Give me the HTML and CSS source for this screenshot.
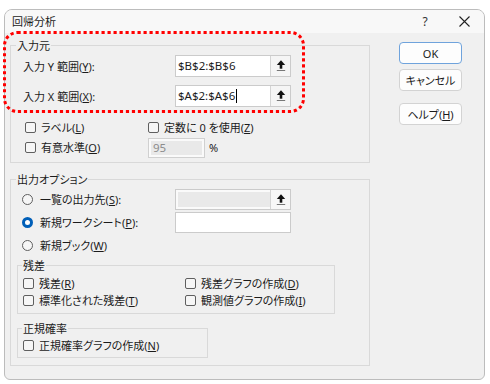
FILE: index.html
```html
<!DOCTYPE html>
<html lang="ja">
<head>
<meta charset="utf-8">
<title>回帰分析</title>
<link rel="stylesheet" href="styles.css">
</head>
<body>
<div class="window">
  <div class="titlebar">
    <span class="title">回帰分析</span>
    <span class="tb-btn tb-help">?</span>
    <span class="tb-btn tb-close"><svg width="11" height="11" viewBox="0 0 11 11"><path d="M0.5 0.5L10.5 10.5M10.5 0.5L0.5 10.5" stroke="#222" stroke-width="1.1" fill="none"/></svg></span>
  </div>
  <div class="content">
    <div class="main">
      <section class="frame input-frame">
        <span class="frame-title">入力元</span>
        <div class="range-row">
          <label class="rng-label">入力 Y 範囲(<u>Y</u>):</label>
          <div class="refedit"><span class="val">$B$2:$B$6</span><span class="collapse"><svg width="10" height="12" viewBox="0 0 10 12"><path d="M5 0.3L0.8 4.9H9.2Z" fill="#111"/><rect x="3.7" y="4.5" width="2.6" height="4.2" fill="#111"/><path d="M0.8 10.5H9.2" stroke="#777" stroke-width="1"/></svg></span></div>
        </div>
        <div class="range-row">
          <label class="rng-label">入力 X 範囲(<u>X</u>):</label>
          <div class="refedit"><span class="val">$A$2:$A$6<span class="caret"></span></span><span class="collapse"><svg width="10" height="12" viewBox="0 0 10 12"><path d="M5 0.3L0.8 4.9H9.2Z" fill="#111"/><rect x="3.7" y="4.5" width="2.6" height="4.2" fill="#111"/><path d="M0.8 10.5H9.2" stroke="#777" stroke-width="1"/></svg></span></div>
        </div>
        <div class="check-row first">
          <span class="check c1"><i class="box"></i><span>ラベル(<u>L</u>)</span></span>
          <span class="check"><i class="box"></i><span>定数に 0 を使用(<u>Z</u>)</span></span>
        </div>
        <div class="check-row second">
          <span class="check c1"><i class="box"></i><span>有意水準(<u>O</u>)</span></span>
          <span class="conf"><span class="disabled-input">95</span><span>%</span></span>
        </div>
      </section>

      <section class="frame output-frame">
        <span class="frame-title">出力オプション</span>
        <div class="radio-row r1">
          <span class="rlabel"><i class="radio"></i><span>一覧の出力先(<u>S</u>):</span></span>
          <div class="refedit disabled"><span class="val"></span><span class="collapse"><svg width="10" height="12" viewBox="0 0 10 12"><path d="M5 0.3L0.8 4.9H9.2Z" fill="#111"/><rect x="3.7" y="4.5" width="2.6" height="4.2" fill="#111"/><path d="M0.8 10.5H9.2" stroke="#777" stroke-width="1"/></svg></span></div>
        </div>
        <div class="radio-row r2">
          <span class="rlabel"><i class="radio on"></i><span>新規ワークシート(<u>P</u>):</span></span>
          <div class="textbox"></div>
        </div>
        <div class="radio-row r3">
          <span class="rlabel"><i class="radio"></i><span>新規ブック(<u>W</u>)</span></span>
        </div>

        <section class="frame sub resid">
          <span class="frame-title">残差</span>
          <div class="srow">
            <span class="check c1"><i class="box"></i><span>残差(<u>R</u>)</span></span>
            <span class="check"><i class="box"></i><span>残差グラフの作成(<u>D</u>)</span></span>
          </div>
          <div class="srow">
            <span class="check c1"><i class="box"></i><span>標準化された残差(<u>T</u>)</span></span>
            <span class="check"><i class="box"></i><span>観測値グラフの作成(<u>I</u>)</span></span>
          </div>
        </section>

        <section class="frame sub normal">
          <span class="frame-title">正規確率</span>
          <div class="srow">
            <span class="check"><i class="box"></i><span>正規確率グラフの作成(<u>N</u>)</span></span>
          </div>
        </section>
      </section>
    </div>

    <div class="buttons">
      <div class="btn default">OK</div>
      <div class="btn cancel">キャンセル</div>
      <div class="btn help">ヘルプ(<u>H</u>)</div>
    </div>
  </div>

  <svg class="highlight" width="302" height="82" viewBox="0 0 302 82"><rect x="1.5" y="1.5" width="299" height="79" rx="13" fill="none" stroke="#ff0000" stroke-width="3" stroke-dasharray="3.2 2.8"/></svg>
</div>
</body>
</html>
```

FILE: styles.css
```css
body {
  margin: 0;
  background: #ffffff;
  font-family: "Noto Sans", "Noto Sans CJK JP", sans-serif;
  font-size: 11px;
  line-height: 17px;
  color: #1b1b1b;
  font-feature-settings: "palt";
}

u {
  text-underline-offset: 1px;
}

.window {
  position: relative;
  margin: 9px 0 0 4px;
  width: 481px;
  height: 371px;
  box-sizing: border-box;
  border: 1px solid #bcbcbc;
  border-radius: 8px 8px 6px 6px;
  background: #f0f0f0;
}

.titlebar {
  height: 23px;
  display: flex;
  align-items: center;
  background: #f8f8f8;
  border-radius: 7px 7px 0 0;
  padding-left: 7px;
}

.title {
  flex: 1;
  line-height: 23px;
}

.tb-btn {
  display: flex;
  align-items: center;
  justify-content: center;
  height: 23px;
}

.tb-help {
  width: 38px;
  font-size: 12px;
  color: #333;
}

.tb-close {
  width: 40px;
}

.content {
  display: flex;
  padding-left: 5px;
}

.main {
  width: 360px;
}

.frame {
  position: relative;
  border: 1px solid #d9d9d9;
}

.frame-title {
  position: absolute;
  top: -9px;
  left: 5px;
  padding: 0 1px;
  line-height: 17px;
  background: #f0f0f0;
  white-space: nowrap;
}

.input-frame {
  margin-top: 12px;
  padding: 9px 0 4px 12px;
}

.range-row {
  display: flex;
  align-items: center;
  height: 22px;
}

.range-row + .range-row {
  margin-top: 8px;
}

.rng-label {
  width: 152px;
}

.refedit {
  width: 116px;
  height: 22px;
  box-sizing: border-box;
  border: 1px solid #cbcbcb;
  background: #ffffff;
  display: flex;
}

.refedit .val {
  flex: 1;
  padding-left: 2px;
  line-height: 20px;
  display: flex;
  align-items: center;
  font-size: 11.5px;
}

.caret {
  display: inline-block;
  width: 1px;
  height: 14px;
  background: #000;
  margin-left: 1px;
}

.collapse {
  width: 20px;
  height: 20px;
  box-sizing: border-box;
  border-left: 1px solid #d4d4d4;
  background: #f5f5f5;
  display: flex;
  align-items: center;
  justify-content: center;
}

.check-row {
  display: flex;
  align-items: center;
  padding-left: 2px;
}

.check-row.first {
  height: 20px;
  margin-top: 10px;
}

.check-row.second {
  height: 21px;
}

.check-row .c1 {
  width: 123px;
}

.check {
  display: flex;
  align-items: center;
  gap: 5px;
  white-space: nowrap;
}

.box {
  width: 11px;
  height: 11px;
  box-sizing: border-box;
  border: 1px solid #5f5f5f;
  border-radius: 2px;
  background: #f6f6f6;
  flex: none;
}

.conf {
  display: flex;
  align-items: center;
  gap: 4px;
}

.disabled-input {
  width: 57px;
  height: 20px;
  box-sizing: border-box;
  border: 1px solid #d0d0d0;
  background: #e9e9e9;
  box-shadow: inset 0 0 0 2px #fafafa;
  color: #8c8c8c;
  padding-left: 4px;
  line-height: 18px;
  font-size: 11.5px;
}

.output-frame {
  margin-top: 16px;
  padding: 9px 0 7px 6px;
}

.radio-row {
  display: flex;
  align-items: center;
  height: 21px;
  padding-left: 5px;
}

.radio-row.r2,
.radio-row.r3 {
  margin-top: 2px;
}

.radio-row.r3 {
  height: 20px;
}

.rlabel {
  width: 153px;
  display: flex;
  align-items: center;
  gap: 7px;
  white-space: nowrap;
}

.radio {
  width: 11px;
  height: 11px;
  box-sizing: border-box;
  border: 1px solid #5f5f5f;
  border-radius: 50%;
  background: #f6f6f6;
  flex: none;
}

.radio.on {
  border: 3px solid #005fb8;
  background: #ffffff;
}

.refedit.disabled {
  height: 21px;
  background: #e9e9e9;
  box-shadow: inset 0 0 0 2px #fafafa;
}

.refedit.disabled .collapse {
  height: 19px;
  background: #f7f7f7;
}

.textbox {
  width: 116px;
  height: 21px;
  box-sizing: border-box;
  border: 1px solid #cbcbcb;
  background: #ffffff;
}

.sub .frame-title {
  left: 4px;
}

.sub.resid {
  margin-top: 10px;
  width: 318px;
  box-sizing: border-box;
  padding: 9px 0 4px 5px;
}

.sub.normal {
  margin-top: 14px;
  width: 191px;
  box-sizing: border-box;
  padding: 8px 0 3px 5px;
}

.srow {
  display: flex;
  align-items: center;
  height: 17px;
}

.srow .c1 {
  width: 162px;
}

.buttons {
  margin-left: 29px;
  margin-top: 9px;
  width: 63px;
  display: flex;
  flex-direction: column;
}

.btn {
  height: 22px;
  box-sizing: border-box;
  border: 1px solid #d3d3d3;
  border-radius: 4px;
  background: #fdfdfd;
  display: flex;
  align-items: center;
  justify-content: center;
}

.btn.default {
  border-color: #6fa3dc;
}

.btn.cancel {
  margin-top: 5px;
}

.btn.help {
  margin-top: 12px;
}

.highlight {
  position: absolute;
  left: -2px;
  top: 21px;
}
```
